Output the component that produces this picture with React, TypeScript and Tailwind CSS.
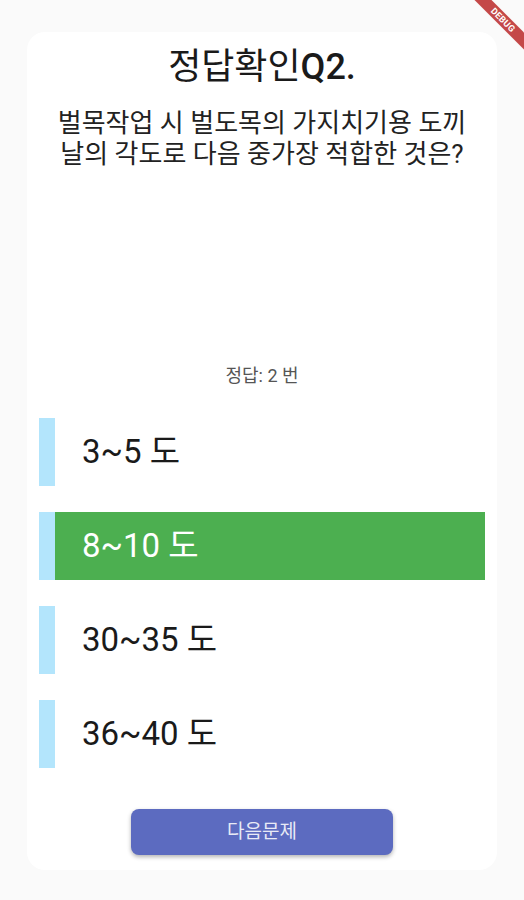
import React from "react";

const options = ["3~5 도", "8~10 도", "30~35 도", "36~40 도"];
const answer = 2;

export default function App() {
  return (
    <div
      className="relative min-h-[900px] w-full overflow-hidden bg-[#fafafa] px-[27px] pt-[32px] pb-[30px]"
      style={{ fontFamily: "Roboto, 'Noto Sans CJK KR', sans-serif" }}
    >
      {/* Card */}
      <div className="flex flex-col rounded-[18px] bg-white px-[12px] pt-[14px] pb-[15px]">
        <h1 className="text-center text-[36px] leading-[42px] font-normal text-[#1a1a1a]">
          정답확인<span className="font-medium">Q2.</span>
        </h1>
        <p className="mt-[20px] text-center text-[26px] leading-[31px] text-[#222]">
          벌목작업 시 벌도목의 가지치기용 도끼
          <br />
          날의 각도로 다음 중가장 적합한 것은?
        </p>

        <div className="mt-[194px] text-center text-[18px] leading-[24px] text-[#555]">
          정답: 2 번
        </div>

        <div className="mt-[30px] flex flex-col gap-[26px]">
          {options.map((opt, i) => {
            const correct = i + 1 === answer;
            return (
              <div key={opt} className="flex h-[68px] items-stretch">
                <div className="w-[16px] bg-[#b3e5fc]" />
                <div
                  className={
                    correct
                      ? "flex flex-1 items-center bg-[#4caf50] pl-[27px] text-[33px] text-white"
                      : "flex flex-1 items-center pl-[27px] text-[33px] text-[#1a1a1a]"
                  }
                >
                  {opt}
                </div>
              </div>
            );
          })}
        </div>

        <div className="mt-[41px] flex justify-center">
          <button className="h-[46px] w-[262px] rounded-[8px] bg-[#5c6bc0] text-[19px] text-[#e8eaf6] shadow-[0_2px_4px_rgba(0,0,0,0.3)]">
            다음문제
          </button>
        </div>
      </div>

      {/* Debug banner */}
      <div className="absolute top-[14px] right-[-34px] flex h-[12px] w-[110px] rotate-45 items-center justify-center bg-[#b71c1c]/80">
        <span className="text-[9px] leading-none font-bold tracking-wide text-white">DEBUG</span>
      </div>
    </div>
  );
}
